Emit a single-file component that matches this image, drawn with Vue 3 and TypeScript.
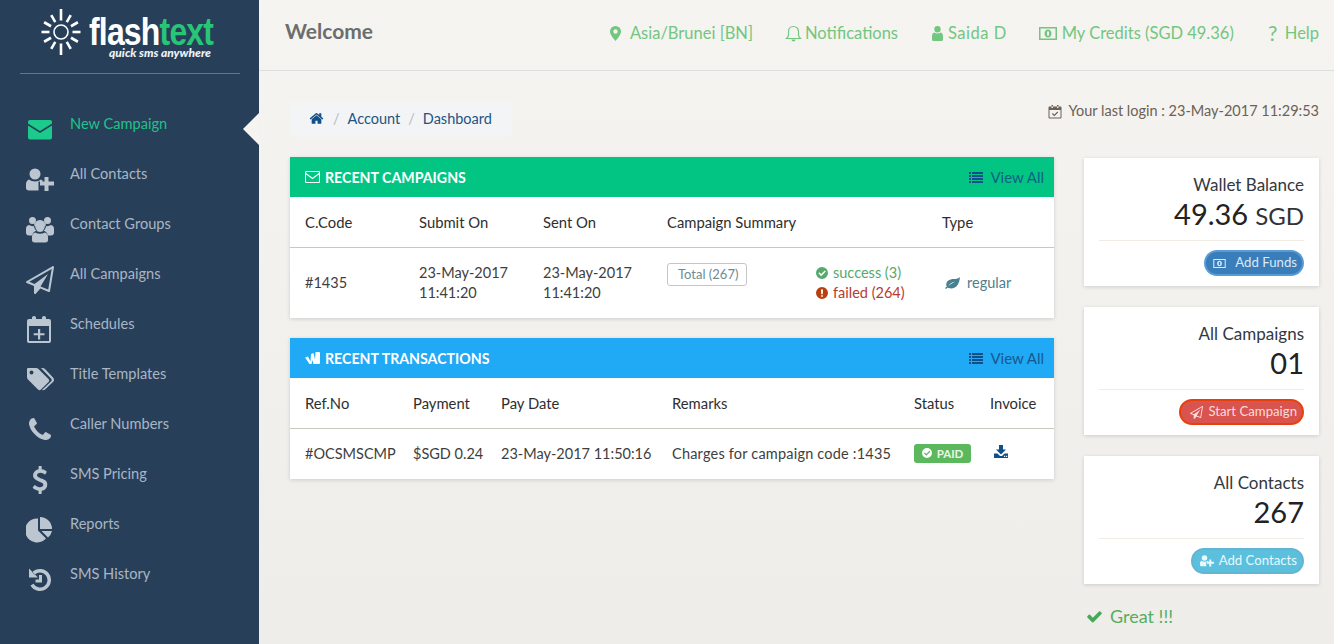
<template>
  <div class="app">
    <aside class="sidebar">
      <div class="brand">
        <svg class="sun" viewBox="0 0 46 46">
          <circle cx="23" cy="23" r="7" fill="none" stroke="#fff" stroke-width="1.600" />
          <g stroke="#fff" stroke-width="2.600">
            <path v-for="ray in rays" :key="ray.angle" :d="ray.d" :transform="`rotate(${ray.angle} 23 23)`" />
          </g>
        </svg>
        <div class="brand-text">
          <div class="brand-name"><span class="flash">flash</span><span class="text">text</span></div>
          <div class="brand-tag">quick sms anywhere</div>
        </div>
      </div>
      <nav class="nav">
        <a v-for="item in navItems" :key="item.label" class="nav-item" :class="{ active: item.active }">
          <svg class="nav-icon" :viewBox="item.vb"><path :d="item.d" fill-rule="evenodd" /></svg>
          <span>{{ item.label }}</span>
        </a>
      </nav>
    </aside>

    <div class="page">
      <header class="topbar">
        <div class="welcome">Welcome</div>
        <div class="top-links">
          <a class="top-link"><svg class="i-marker" viewBox="0 0 11 15"><path :d="icons.marker" fill-rule="evenodd" /></svg><span>Asia/Brunei [BN]</span></a>
          <a class="top-link notif"><svg class="i-bell" viewBox="0 0 17 17"><path d="M8.500 1.500c-3 0-5 2.200-5 5v3.500c0 1.500-.8 2.500-2 3.500h14c-1.200-1-2-2-2-3.500V6.500c0-2.800-2-5-5-5z" fill="none" stroke="currentColor" stroke-width="1.200" /><path d="M6.500 14.500a2 2 0 0 0 4 0z" /></svg><span>Notifications</span></a>
          <a class="top-link who"><svg class="i-user" viewBox="0 0 11 15"><path d="M5.500 0a3.200 3.200 0 1 1 0 6.400a3.200 3.200 0 0 1 0-6.400zM2 6.500q3.500 2 7 0q2 .8 2 3.500v3.500q0 1.500-1.500 1.500h-8Q0 15 0 13.500V10q0-2.700 2-3.500z" /></svg><span>Saida D</span></a>
          <a class="top-link"><svg class="i-money" viewBox="0 0 18 13"><path :d="icons.money" fill-rule="evenodd" /></svg><span>My Credits (SGD 49.36)</span></a>
          <a class="top-link"><span class="qmark">?</span><span>Help</span></a>
        </div>
      </header>

      <main class="content">
        <div class="crumb-row">
          <ol class="crumbs">
            <li class="home"><svg viewBox="0 0 1792 1792"><path :d="icons.home" /></svg></li>
            <li class="sep">/</li>
            <li>Account</li>
            <li class="sep">/</li>
            <li>Dashboard</li>
          </ol>
          <div class="last-login">
            <svg viewBox="0 0 14 15"><path d="M1.500 2.500h11a1 1 0 0 1 1 1v10a1 1 0 0 1-1 1h-11a1 1 0 0 1-1-1v-10a1 1 0 0 1 1-1zM1.500 6v7.500h11V6zM3.500 1h1.500v3H3.500zM9 1h1.500v3H9z" fill-rule="evenodd" /><path d="M4.300 9.500l2 2 3.500-3.500" fill="none" stroke="currentColor" stroke-width="1.100" /></svg>
            <span>Your last login : 23-May-2017 11:29:53</span>
          </div>
        </div>

        <div class="columns">
          <div class="left">
            <section class="panel">
              <div class="panel-head green">
                <div class="panel-title">
                  <svg class="i-env" viewBox="0 0 15 12"><path d="M1.500.5h12a1 1 0 0 1 1 1v9a1 1 0 0 1-1 1h-12a1 1 0 0 1-1-1v-9a1 1 0 0 1 1-1zM.8 2.500l6.700 5 6.700-5" fill="none" stroke="#fff" stroke-width="1.100" /></svg>
                  RECENT CAMPAIGNS
                </div>
                <a class="view-all"><svg viewBox="0 0 14 11"><path :d="icons.list" /></svg>View All</a>
              </div>
              <div class="row head camp-cols">
                <div>C.Code</div>
                <div>Submit On</div>
                <div>Sent On</div>
                <div class="wide">Campaign Summary</div>
                <div>Type</div>
              </div>
              <div class="row body camp-cols camp-row">
                <div class="center">#1435</div>
                <div class="center">23-May-2017<br />11:41:20</div>
                <div class="center">23-May-2017<br />11:41:20</div>
                <div class="total-cell"><span class="total">Total (267)</span></div>
                <div class="center summary">
                  <div class="ok"><svg viewBox="0 0 14 14"><path :d="icons.checkCircle" fill-rule="evenodd" /></svg>success (3)</div>
                  <div class="bad"><svg viewBox="0 0 14 14"><path :d="icons.exclaim" fill-rule="evenodd" /></svg>failed (264)</div>
                </div>
                <div class="center regular"><svg viewBox="0 0 15 12"><path d="M15 0c-.5 6-3 11.500-9 11.500-1.500 0-2.500-.3-3.300-.9L1 12 0 11l1.800-1.600C1.300 8.500 1 7.500 1.500 6 2.500 3 6 2 9 2c2.500 0 4.500-.5 6-2zM10 4.500C7 5 4.500 7 3 9.500 5 7.500 7.500 6 10 4.500z" fill-rule="evenodd" /></svg>regular</div>
              </div>
            </section>

            <section class="panel">
              <div class="panel-head blue">
                <div class="panel-title">
                  <svg class="i-wal" viewBox="0 0 15 12"><path d="M0 5.500L3 4.500 5.500 9.500 6 2 8.500 1 10 7.500 10.500 0H14q1 0 1 1v10q0 1-1 1H8.500L7.500 8 6.500 12H4.500z" fill="#fff" /></svg>
                  RECENT TRANSACTIONS
                </div>
                <a class="view-all"><svg viewBox="0 0 14 11"><path :d="icons.list" /></svg>View All</a>
              </div>
              <div class="row head tran-cols">
                <div>Ref.No</div>
                <div>Payment</div>
                <div>Pay Date</div>
                <div>Remarks</div>
                <div>Status</div>
                <div>Invoice</div>
              </div>
              <div class="row body tran-cols tran-row">
                <div>#OCSMSCMP</div>
                <div>$SGD 0.24</div>
                <div>23-May-2017 11:50:16</div>
                <div class="remark">Charges for campaign code :1435</div>
                <div><span class="paid"><svg viewBox="0 0 14 14"><path :d="icons.checkCircle" fill-rule="evenodd" /></svg>PAID</span></div>
                <div><svg class="i-dl" viewBox="0 0 14 13"><path d="M5 0h4v4.500h3L7 9.500 2 4.500h3zM0 8.500h3.500L6 11h2l2.500-2.500H14V13H0zM10 10.800h1.200V12H10zM12 10.800h1.200V12H12z" fill-rule="evenodd" /></svg></div>
              </div>
            </section>
          </div>

          <div class="right">
            <div v-for="card in cards" :key="card.title" class="stat">
              <div class="stat-title">{{ card.title }}</div>
              <div class="stat-value">{{ card.value }}<small v-if="card.unit">{{ card.unit }}</small></div>
              <div class="stat-foot">
                <a class="pill" :class="card.tone">
                  <svg :viewBox="card.vb" :class="card.iconClass"><path :d="card.d" fill-rule="evenodd" /></svg>
                  <span>{{ card.action }}</span>
                </a>
              </div>
            </div>
            <div class="great">
              <svg viewBox="0 0 1792 1792"><path :d="icons.check" /></svg>
              Great !!!
            </div>
          </div>
        </div>
      </main>
    </div>
  </div>
</template>

<script setup lang="ts">
const plane =
  'M1764 11q33 24 27 64l-256 1536q-5 29-32 45-14 8-31 8-11 0-24-5l-527-215-298 327q-18 21-47 21-14 0-23-4-19-7-30-23.500t-11-36.500v-452l-472-193q-37-14-40-55-3-39 32-59l1664-960q35-21 68 2zm-342 1499l221-1323-1434 827 336 137 863-639-478 797z'
const userPlus =
  'M9 2.500a5.500 5.500 0 1 1 0 11a5.500 5.500 0 0 1 0-11zM3 13.500C6 16 12 16 15 13.500l1.500 1v1H12.500V24.500H3C1 24.500 0 23.500 0 22V18C0 16 1 14.500 3 13.500zM18.500 11h4v4.500H28v4h-5.500V25h-4v-5.500H14v-4h4.500z'
const money =
  'M0 0h18v13H0zM1.500 1.500v10h15v-10zM9 2.500c2.200 0 3.500 1.700 3.500 4s-1.300 4-3.500 4-3.500-1.700-3.500-4 1.300-4 3.500-4zM8 4.500v4h2v-4z'

// twelve rays round the logo sun, the vertical pair is longer
const rays = Array.from({ length: 12 }, (_, i) => ({
  angle: i * 30,
  d: i % 6 === 0 ? 'M23 11.500V0' : 'M23 11.500V3.500',
}))

const icons = {
  marker: 'M5.500 0a5.500 5.500 0 0 1 5.500 5.500c0 3-3 6.500-5.500 9.500C3 12 0 8.500 0 5.500A5.500 5.500 0 0 1 5.500 0zM5.500 3.300a2.200 2.200 0 1 0 0 4.400a2.200 2.200 0 0 0 0-4.400z',
  money,
  home: 'M1472 992v480q0 26-19 45t-45 19h-384v-384h-256v384h-384q-26 0-45-19t-19-45v-480q0-1 .5-3t.5-3l575-474 575 474q1 2 1 6zm223-69l-62 74q-8 9-21 11h-3q-13 0-21-7l-692-577-692 577q-12 8-24 7-13-2-21-11l-62-74q-8-10-7-23.500t11-21.500l719-599q32-26 76-26t76 26l244 204v-195q0-14 9-23t23-9h192q14 0 23 9t9 23v408l219 182q10 8 11 21.500t-7 23.500z',
  list: 'M0 0h2v2H0zM3 0h11v2H3zM0 3h2v2H0zM3 3h11v2H3zM0 6h2v2H0zM3 6h11v2H3zM0 9h2v2H0zM3 9h11v2H3z',
  checkCircle: 'M7 0a7 7 0 1 1 0 14a7 7 0 0 1 0-14zM10.300 4L6 8.300 3.900 6.200 2.700 7.400 6 10.700l5.500-5.500z',
  exclaim: 'M7 0a7 7 0 1 1 0 14a7 7 0 0 1 0-14zM5.800 2.800l.3 5.600h1.800l.3-5.600zM6 9.500v2h2v-2z',
  check: 'M1671 566q0 40-28 68l-724 724-136 136q-28 28-68 28t-68-28l-136-136-362-362q-28-28-28-68t28-68l136-136q28-28 68-28t68 28l294 295 656-657q28-28 68-28t68 28l136 136q28 28 28 68z',
}

const navItems = [
  { label: 'New Campaign', active: true, vb: '0 0 28 28', d: 'M4 4h20a2 2 0 0 1 2 2v1.500L14 15 2 7.500V6a2 2 0 0 1 2-2zM2 9.500L14 17 26 9.500V21.500a2 2 0 0 1-2 2H4a2 2 0 0 1-2-2z' },
  { label: 'All Contacts', vb: '0 0 28 28', d: userPlus },
  { label: 'Contact Groups', vb: '0 0 28 28', d: 'M14 4a6 6 0 1 1 0 12a6 6 0 0 1 0-12zM6.500 1a3.500 3.500 0 1 1 0 7a3.500 3.500 0 0 1 0-7zM21.500 1a3.500 3.500 0 1 1 0 7a3.500 3.500 0 0 1 0-7zM3 9q3.500 2 6 .5 0 3 2 5-4 1-5 5H3q-3 0-3-3v-4q0-2.500 3-3.500zM25 9q3 1 3 3.500v4q0 3-3 3h-3q-1-4-5-5 2-2 2-5 2.500 1.500 6-.5zM9 16.500q5 2.500 10 0 3 1 3 4.500v3q0 2.500-3 2.500H9q-3 0-3-2.500v-3q0-3.500 3-4.500z' },
  { label: 'All Campaigns', vb: '0 0 1792 1792', d: plane },
  { label: 'Schedules', vb: '0 0 28 28', d: 'M3 3h3V1.500Q6 0 8 0t2 1.500V3h6V1.500Q16 0 18 0t2 1.500V3h3q2 0 2 2v20q0 2-2 2H3q-2 0-2-2V5q0-2 2-2zM3 10v15h20V10zM12 13h2.200v4.200H18.500v2.100H14.200v4.200H12v-4.200H7.700v-2.100H12z' },
  { label: 'Title Templates', vb: '0 0 28 28', d: 'M2 2h8q1.500 0 2.500 1l10 10q1.500 1.500 0 3L15 23.500q-1.500 1.500-3 0L2 13.500Q1 12.500 1 11V3q0-1 1-1zM5.500 4.500a2 2 0 1 0 0 4a2 2 0 0 0 0-4zM15 2h1.500q1.500 0 2.500 1l8 8.500q2 2.500 0 4.500l-8 7.500q-1.500 1-3 .5l9-8.500q1.500-1.500 0-3z' },
  { label: 'Caller Numbers', vb: '0 0 1792 1792', d: 'M1600 1240q0 27-10 70.500t-21 68.500q-21 50-122 106-94 51-186 51-27 0-53-3.500t-57.500-12.500-47-14.500-55.500-20.500-49-18q-98-35-175-83-127-79-264-216t-216-264q-48-77-83-175-3-9-18-49t-20.500-55.500-14.500-47-12.500-57.500-3.500-53q0-92 51-186 56-101 106-122 25-11 68.500-21t70.500-10q14 0 21 3 18 6 53 76 11 19 30 54t35 63.500 31 53.500q3 4 17.500 25t21.500 35.500 7 28.500q0 20-28.500 50t-62 55-62 53-28.500 46q0 9 5 22.500t8.500 20.500 14 24 11.500 19q76 137 174 235t235 174q2 1 19 11.500t24 14 20.500 8.500 22.500 5q18 0 46-28.500t53-62 55-62 50-28.500q14 0 28.500 7t35.500 21.500 25 17.500q25 15 53.500 31t63.500 35 54 30q70 35 76 53 3 7 3 21z' },
  { label: 'SMS Pricing', vb: '0 0 1792 1792', d: 'M1362 1185q0 153-99.500 263.500t-258.500 136.500v175q0 14-9 23t-23 9h-135q-13 0-22.500-9.500t-9.500-22.500v-175q-66-9-127.500-31t-101.500-44.500-74-48-46.500-37.500-17.500-18q-17-21-2-41l103-135q7-10 23-12 15-2 24 9l2 2q113 99 243 125 37 8 74 8 81 0 142.500-43t61.500-122q0-28-15-53t-33.500-42-58.500-37.500-66-32-80-32.500q-39-16-61.500-25t-61.500-26.500-62.500-31-56.500-35.500-53.500-42.500-43.500-49-35.500-58-21-66.500-8.500-78q0-138 98-242t255-134v-180q0-13 9.500-22.500t22.500-9.500h135q14 0 23 9t9 23v176q57 6 110.500 23t87 33.500 63.500 37.500 39 29 15 14q17 18 5 38l-81 146q-8 15-23 16-14 3-27-7-3-3-14.500-12t-39-26.500-58.500-32-74.500-26-85.500-11.500q-95 0-155 43t-60 111q0 26 8.500 48t29.500 41.500 39.500 33 56 31 60.500 27 70 27.500q53 20 81 31.500t76 35 75.500 42.500 62 50 53 63.500 31.500 76.500 13 94z' },
  { label: 'Reports', vb: '0 0 28 28', d: 'M12 2.500V14.500L20 22.500A12 12 0 1 1 12 2.500zM14 1A12 12 0 0 1 26 13H14zM15.500 15H26A12 12 0 0 1 22 21.500z' },
  { label: 'SMS History', vb: '0 0 28 28', d: 'M6.200 6.200A11 11 0 1 1 4.500 19.500L7.500 17.750A7.500 7.500 0 1 0 8.700 8.700zM3 2.500V11.500H12zM13 9h3v7.500h-6.500v-3H13z' },
]

const cards = [
  { title: 'Wallet Balance', value: '49.36', unit: 'SGD', action: 'Add Funds', tone: 'funds', vb: '0 0 18 13', d: money, iconClass: 'i-pill-money' },
  { title: 'All Campaigns', value: '01', unit: '', action: 'Start Campaign', tone: 'start', vb: '0 0 1792 1792', d: plane, iconClass: 'i-pill-plane' },
  { title: 'All Contacts', value: '267', unit: '', action: 'Add Contacts', tone: 'contacts', vb: '0 0 28 28', d: userPlus, iconClass: 'i-pill-user' },
]
</script>

<style scoped>
.app {
  display: flex;
  height: 644px;
  overflow: hidden;
  font-family: Lato, "Open Sans", sans-serif;
  color: #2b2b2b;
}

/* sidebar */
.sidebar {
  width: 259px;
  flex-shrink: 0;
  background: #283f59;
}
.brand {
  height: 64px;
  margin: 0 19px 0 20px;
  border-bottom: 1px solid #64768c;
  display: flex;
  align-items: flex-start;
  padding: 9px 0 0 18px;
  gap: 5px;
}
.sun {
  width: 46px;
  height: 46px;
  flex-shrink: 0;
}
.brand-text {
  width: 130px;
  margin-top: 6px;
}
.brand-name {
  font-family: "Liberation Sans", sans-serif;
  font-weight: 700;
  font-size: 39px;
  line-height: 34px;
  letter-spacing: -1px;
  transform: scaleX(0.82);
  transform-origin: left center;
  white-space: nowrap;
}
.flash { color: #fff; }
.text { color: #27c677; }
.brand-tag {
  font-size: 12px;
  font-weight: 900;
  font-style: italic;
  color: #eef2f5;
  line-height: 12px;
  margin: -2px 0 0 20px;
  white-space: nowrap;
}
.nav {
  margin-top: 31px;
}
.nav-item {
  position: relative;
  display: flex;
  align-items: flex-start;
  height: 50px;
  box-sizing: border-box;
  padding: 9px 0 0 26px;
  gap: 16px;
  color: #a9b6c5;
  font-size: 14.600px;
  line-height: 19px;
}
.nav-icon {
  width: 28px;
  height: 28px;
  margin-top: 2px;
  flex-shrink: 0;
  fill: #bcc6d1;
}
.nav-item.active { color: #1fc389; }
.nav-item.active .nav-icon { fill: #1ccb8b; }
.nav-item.active::after {
  content: "";
  position: absolute;
  right: 0;
  top: 8px;
  border: 16px solid transparent;
  border-left-width: 0;
  border-right-color: #f5f4f0;
}

/* page */
.page {
  flex: 1;
  min-width: 0;
  background: linear-gradient(#f5f4f0, #eeede9);
}
.topbar {
  height: 62px;
  border-bottom: 1px solid #dedede;
  display: flex;
  align-items: center;
  justify-content: space-between;
  padding: 0 15px 8px 26px;
}
.welcome {
  font-size: 21px;
  font-weight: 700;
  color: #6d6d6d;
  margin-bottom: 2px;
}
.top-links {
  display: flex;
  align-items: center;
  gap: 32px;
  color: #72c67f;
  font-size: 16.500px;
  margin-top: 4px;
}
.top-link {
  display: flex;
  align-items: center;
  gap: 5px;
}
.notif { margin-right: 2px; }
.who { letter-spacing: 0.5px; }
.top-link svg { fill: currentColor; flex-shrink: 0; }
.i-marker { width: 11px; height: 15px; margin-right: 4px; }
.i-bell { width: 17px; height: 17px; margin-right: -2px; }
.i-user { width: 11px; height: 15px; }
.i-money { width: 18px; height: 13px; }
.qmark { font-size: 21px; width: 14px; text-align: center; line-height: 20px; }

.content {
  padding: 30px 15px 0 31px;
}
.crumb-row {
  display: flex;
  justify-content: space-between;
  align-items: flex-start;
}
.crumbs {
  list-style: none;
  margin: 0;
  padding: 0 20px 2px 19px;
  height: 34px;
  display: flex;
  align-items: center;
  gap: 8px;
  background: #f3f4f6;
  border-radius: 4px;
  color: #1c5483;
  font-size: 14.500px;
}
.home svg {
  display: block;
  width: 15px;
  height: 15px;
  fill: #0f4f8a;
  margin: 1px 1px 0 0;
}
.sep { color: #b8bcc0; }
.last-login {
  display: flex;
  align-items: center;
  gap: 7px;
  color: #6b6156;
  font-size: 14.500px;
  line-height: 20px;
}
.last-login svg { width: 14px; height: 15px; fill: currentColor; }

.columns {
  display: flex;
  gap: 30px;
  margin-top: 20px;
}
.left {
  width: 764px;
  display: flex;
  flex-direction: column;
  gap: 20px;
}
.panel {
  background: #fff;
  box-shadow: 0 1px 4px rgba(0, 0, 0, 0.15);
}
.panel-head {
  height: 40px;
  padding: 0 10px 0 15px;
  display: flex;
  align-items: center;
  justify-content: space-between;
}
.green { background: #02c584; }
.blue { background: #20a9f5; }
.panel-title {
  display: flex;
  align-items: center;
  gap: 5px;
  color: #fff;
  font-size: 14.200px;
  font-weight: 700;
}
.i-env, .i-wal { width: 15px; height: 12px; }
.view-all {
  display: flex;
  align-items: center;
  gap: 7px;
  font-size: 15px;
  color: #0c6382;
}
.blue .view-all { color: #17588f; }
.view-all svg { width: 14px; height: 11px; fill: #0f4f8a; }

.row {
  display: grid;
  padding-left: 15px;
  font-size: 14.500px;
}
.head {
  height: 51px;
  align-items: center;
  border-bottom: 1px solid #c9c7bf;
  box-sizing: border-box;
  font-size: 14.800px;
  color: #2e2e2e;
}
.body { color: #3e3e3e; }
.camp-cols { grid-template-columns: 114px 124px 124px 149px 126px 1fr; }
.tran-cols { grid-template-columns: 108px 88px 171px 242px 76px 1fr; }
.wide { grid-column: span 2; }
.camp-row {
  height: 70px;
  line-height: 20px;
}
.tran-row {
  height: 50px;
  align-items: center;
  padding-bottom: 2px;
  box-sizing: border-box;
}
.remark { letter-spacing: 0.2px; white-space: nowrap; }
.center { align-self: center; }
.total-cell { padding-top: 15px; }
.total {
  display: inline-block;
  height: 23px;
  line-height: 21px;
  padding: 0 10px;
  box-sizing: border-box;
  width: 80px;
  white-space: nowrap;
  border: 1px solid #c6c6c6;
  border-radius: 3px;
  font-size: 13px;
  color: #6f8a94;
}
.summary svg { width: 12px; height: 12px; fill: currentColor; margin-right: 5px; vertical-align: -1px; }
.ok { color: #56a96b; }
.bad { color: #b8392f; }
.bad svg { fill: #b8400f; }
.regular {
  display: flex;
  align-items: center;
  gap: 7px;
  color: #4d7f8e;
  padding-left: 3px;
}
.regular svg { width: 15px; height: 12px; fill: #47818f; }
.paid {
  display: inline-flex;
  align-items: center;
  justify-content: center;
  gap: 5px;
  width: 57px;
  height: 19px;
  background: #5cb85c;
  border-radius: 3px;
  color: #e9f6e9;
  font-size: 11.500px;
  font-weight: 700;
}
.paid svg { width: 10px; height: 10px; fill: #fff; }
.i-dl { display: block; width: 14px; height: 13px; fill: #0f4f8a; margin-left: 4px; margin-top: -3px; }

/* right column */
.right {
  width: 235px;
  margin-top: 1px;
}
.stat {
  background: #fff;
  box-shadow: 0 1px 4px rgba(0, 0, 0, 0.15);
  height: 128px;
  box-sizing: border-box;
  padding: 17px 15px 0;
  margin-bottom: 21px;
  text-align: right;
}
.stat-title {
  font-size: 17px;
  line-height: 20px;
  color: #33383f;
}
.stat-value {
  font-size: 29px;
  line-height: 40px;
  color: #222;
  border-bottom: 1px solid #f0ebe3;
  height: 47px;
  margin-top: -1px;
  box-sizing: border-box;
}
.stat-value small { font-size: 24px; color: #333; margin-left: 7px; }
.stat-foot {
  display: flex;
  justify-content: flex-end;
  margin-top: 9px;
}
.pill {
  display: flex;
  align-items: center;
  justify-content: flex-end;
  height: 26px;
  box-sizing: border-box;
  border-radius: 13px;
  border: 2px solid;
  padding: 0 5px 3px 0;
  font-size: 13.200px;
  white-space: nowrap;
  gap: 5px;
}
.pill svg { fill: currentColor; flex-shrink: 0; margin-top: 3px; }
.funds { width: 100px; background: #3a7dbb; border-color: #5b9bd5; color: #dbe9f6; gap: 9px; }
.start { width: 125px; background: #d9534f; border-color: #e8400d; color: #fbdcdc; }
.contacts { width: 113px; background: #5bc0de; border-color: #64b5cf; color: #eaf8fc; }
.i-pill-money { width: 13px; height: 9px; }
.i-pill-plane { width: 13px; height: 13px; }
.i-pill-user { width: 14px; height: 14px; }
.great {
  display: flex;
  align-items: center;
  gap: 7px;
  padding-left: 2px;
  margin-top: 20px;
  font-size: 18px;
  color: #56ad5f;
}
.great svg { width: 17px; height: 17px; fill: #48a85a; }
</style>

<style>
html, body { margin: 0; padding: 0; overflow: hidden; }
</style>
